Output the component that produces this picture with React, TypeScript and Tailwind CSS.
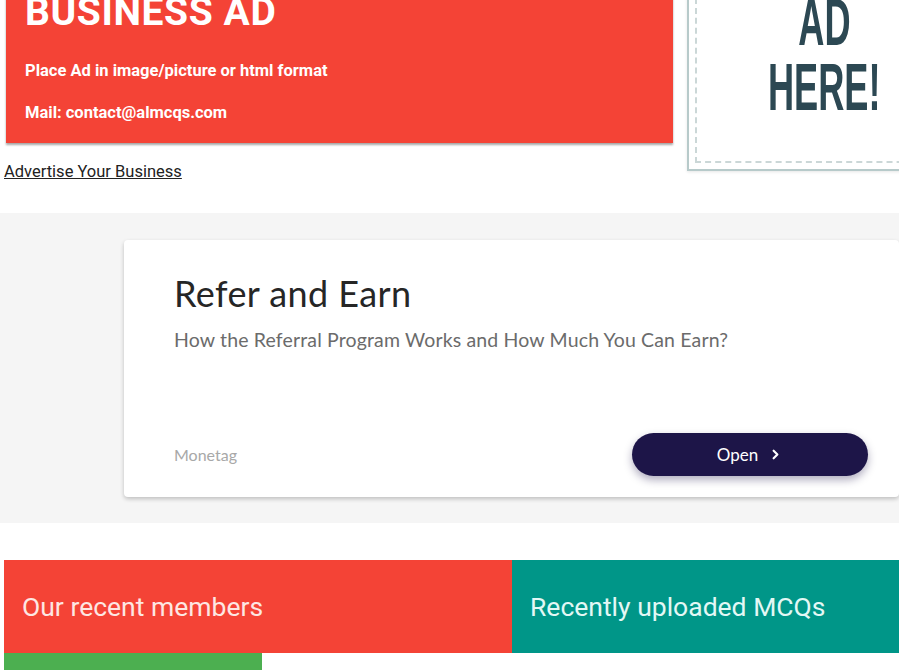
import React from "react";
import { ChevronRight } from "lucide-react";

export default function App() {
  return (
    <div className="w-[899px] h-[670px] overflow-hidden bg-white font-['Roboto',sans-serif]">
      {/* Top row */}
      <div className="flex items-start -mt-[20px]">
        <div className="ml-[6px] w-[667px] flex-none">
          <div className="h-[163px] bg-[#f44336] shadow-[0_2px_2px_rgba(0,0,0,0.35)] pl-[19px] pt-[14px] text-white">
            <div className="text-[39px] font-bold leading-[36px] tracking-[0.6px]">BUSINESS AD</div>
            <div className="mt-[31px] text-[16.5px] font-bold leading-[20px]">Place Ad in image/picture or html format</div>
            <div className="mt-[22px] text-[16.5px] font-bold leading-[20px]">Mail: contact@almcqs.com</div>
          </div>
          <a className="block mt-[19px] -ml-[2px] text-[16.5px] leading-[20px] text-[#222] underline">Advertise Your Business</a>
        </div>
        <div className="ml-[14px] w-[274px] h-[191px] flex-none border-2 border-[#b7caca] bg-white shadow-[0_1px_3px_rgba(0,0,0,0.1)] p-[6px] flex">
          <div className="flex-1 border-2 border-dashed border-[#cbd7d7] overflow-hidden flex flex-col items-center">
            <div className="-mt-[1px] font-['Liberation_Sans',sans-serif] font-bold text-[67px] leading-[65px] text-[#2c4853] flex flex-col items-center">
              <span className="inline-block scale-x-[0.54]">AD</span>
              <span className="inline-block scale-x-[0.54]">HERE!</span>
            </div>
          </div>
        </div>
      </div>

      {/* Gray section with card */}
      <div className="mt-[31px] h-[310px] bg-[#f5f5f5] pl-[124px] pt-[27px]">
        <div className="w-[775px] h-[257px] bg-white rounded-[4px] shadow-[0_2px_4px_rgba(0,0,0,0.22)] pl-[50px] pr-[31px] pt-[33px] pb-[21px] flex flex-col font-['Lato',sans-serif]">
          <div className="text-[36px] leading-[40px] tracking-[0.4px] text-[#262626]">Refer and Earn</div>
          <div className="mt-[14px] text-[19.5px] leading-[26px] tracking-[0.15px] text-[#6b6b6b]">How the Referral Program Works and How Much You Can Earn?</div>
          <div className="mt-auto flex items-center justify-between">
            <span className="text-[16px] text-[#a8a8a8]">Monetag</span>
            <button className="w-[236px] h-[43px] rounded-full bg-[#1d1548] text-white text-[17px] flex items-center justify-center gap-[10px] shadow-[0_4px_8px_rgba(29,21,72,0.35)]">
              <span>Open</span>
              <ChevronRight size={15} strokeWidth={3.5} />
            </button>
          </div>
        </div>
      </div>

      {/* Bottom strip */}
      <div className="mt-[37px] ml-[4px] flex h-[93px]">
        <div className="w-[508px] flex-none bg-[#f44336] flex items-center pl-[18px]">
          <span className="text-[26.5px] text-[#fde7e3]">Our recent members</span>
        </div>
        <div className="flex-1 bg-[#009688] flex items-center pl-[18px]">
          <span className="text-[26.5px] text-[#e3f8f5]">Recently uploaded MCQs</span>
        </div>
      </div>
      <div className="ml-[4px] flex h-[20px]">
        <div className="w-[258px] bg-[#4caf50]" />
      </div>
    </div>
  );
}
